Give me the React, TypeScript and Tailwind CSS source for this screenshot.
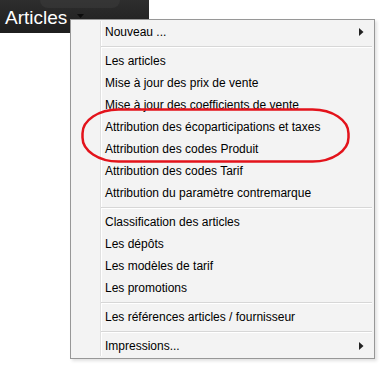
import React from "react";

const groups: { label: string; sub?: boolean }[][] = [
  [{ label: "Nouveau ...", sub: true }],
  [
    { label: "Les articles" },
    { label: "Mise à jour des prix de vente" },
    { label: "Mise à jour des coefficients de vente" },
    { label: "Attribution des écoparticipations et taxes" },
    { label: "Attribution des codes Produit" },
    { label: "Attribution des codes Tarif" },
    { label: "Attribution du paramètre contremarque" },
  ],
  [
    { label: "Classification des articles" },
    { label: "Les dépôts" },
    { label: "Les modèles de tarif" },
    { label: "Les promotions" },
  ],
  [{ label: "Les références articles / fournisseur" }],
  [{ label: "Impressions...", sub: true }],
];

function Item({ label, sub }: { label: string; sub?: boolean }) {
  return (
    <div className="h-[22px] flex items-center pl-[34px] pr-[10px] text-[12px] text-black leading-none">
      <span className="flex-1 whitespace-nowrap">{label}</span>
      {sub && (
        <svg width="5" height="8" viewBox="0 0 5 8" className="block">
          <path d="M0 0 L4.5 4 L0 8 Z" fill="#222" />
        </svg>
      )}
    </div>
  );
}

function Sep() {
  return (
    <div className="h-[7px] flex flex-col pl-[30px] pr-[2px] pt-[3px]">
      <div className="h-px bg-[#d7d7d7]" />
      <div className="h-px bg-white" />
    </div>
  );
}

export default function App() {
  return (
    <div
      className="relative w-[381px] h-[365px] bg-white overflow-hidden"
      style={{ fontFamily: '"Liberation Sans", Arial, sans-serif' }}
    >
      <div className="relative w-[149px] h-[33px] bg-gradient-to-b from-[#2e2e2e] to-[#1e1e1e] flex items-center pl-[5px] pt-[2px]">
        <div className="absolute left-[40px] top-0 w-[80px] h-[8px] rounded-b-[20px] bg-[#3a3a3a] opacity-60" />
        <span className="relative text-white text-[19px] leading-none">Articles</span>
        <svg width="7" height="4" viewBox="0 0 7 4" className="absolute left-[77px] top-[14px]">
          <path d="M0 0 L7 0 L3.5 4 Z" fill="#0c0c0c" />
        </svg>
      </div>

      <div className="absolute left-[70px] top-[19px] w-[305px] h-[340px] border border-[#979797] bg-[#f3f3f3] py-[1px] shadow-[2px_2px_3px_rgba(0,0,0,0.12)]">
        <div className="absolute left-[29px] top-[1px] bottom-[2px] w-[2px] flex">
          <div className="w-px bg-[#e0e0e0]" />
          <div className="w-px bg-white" />
        </div>
        <div className="relative">
          {groups.map((g, gi) => (
            <React.Fragment key={gi}>
              {gi > 0 && <Sep />}
              {g.map((it) => (
                <Item key={it.label} label={it.label} sub={it.sub} />
              ))}
            </React.Fragment>
          ))}
        </div>
      </div>

      <svg
        className="absolute left-[81px] top-[107px]"
        width="270"
        height="58"
        viewBox="0 0 270 58"
      >
        <rect
          x="1.5"
          y="2.5"
          width="266"
          height="52"
          rx="36"
          ry="24"
          fill="none"
          stroke="#e3131b"
          strokeWidth="2.5"
        />
      </svg>
    </div>
  );
}
